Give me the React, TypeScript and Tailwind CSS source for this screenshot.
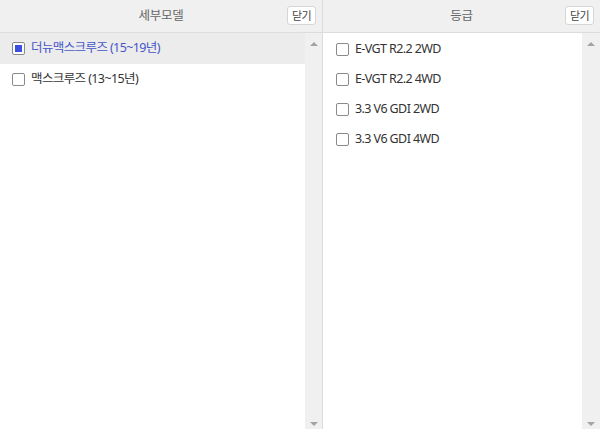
const subModels = [
  { id: 'new', label: '더뉴맥스크루즈 (15~19년)', checked: true },
  { id: 'old', label: '맥스크루즈 (13~15년)', checked: false }
]

const grades = ['E-VGT R2.2 2WD', 'E-VGT R2.2 4WD', '3.3 V6 GDI 2WD', '3.3 V6 GDI 4WD']

const font = { fontFamily: '"Noto Sans", "Noto Sans CJK KR", sans-serif' }

const Checkbox = ({ checked }: { checked: boolean }) => (
  <span className="flex h-[13px] w-[13px] shrink-0 items-center justify-center rounded-[2px] border border-[#8a8a8a] bg-white">
    {checked && <span className="h-[7px] w-[7px] bg-[#3b4fe0]" />}
  </span>
)

const Scrollbar = ({ width }: { width: string }) => (
  <div className={`flex flex-col items-center justify-between bg-[#f0f0f0] pt-[9px] pb-[3px] ${width}`}>
    <span className="h-0 w-0 border-x-[4px] border-b-[4px] border-x-transparent border-b-[#a3a3a3]" />
    <span className="h-0 w-0 border-x-[4px] border-t-[4px] border-x-transparent border-t-[#a3a3a3]" />
  </div>
)

const PanelHeader = ({ title }: { title: string }) => (
  <div className="relative flex h-[33px] items-center justify-center border-b border-[#dcdcdc] bg-[#f0f0f0]">
    <span className="text-[12.5px] tracking-[-0.3px] text-[#666]">{title}</span>
    <button
      type="button"
      className="absolute right-[6px] top-[6px] flex h-[19px] w-[29px] items-center justify-center rounded-[3px] border border-[#d6d6d6] bg-white text-[11px] leading-none tracking-[-0.5px] text-[#444]"
    >
      닫기
    </button>
  </div>
)

export default function App() {
  return (
    <div className="flex h-[429px] w-[600px] bg-white" style={font}>
      <div className="flex w-[323px] flex-col border-r border-[#dcdcdc]">
        <PanelHeader title="세부모델" />
        <div className="flex flex-1">
          <ul className="flex-1">
            {subModels.map((item) => (
              <li
                key={item.id}
                className={`flex h-[31px] items-center gap-[6px] pl-[12px] text-[12.5px] ${
                  item.checked ? 'bg-[#ececec] text-[#4656c8]' : 'text-[#333]'
                }`}
              >
                <Checkbox checked={item.checked} />
                <span className="tracking-[-0.6px]">{item.label}</span>
              </li>
            ))}
          </ul>
          <Scrollbar width="w-[17px]" />
        </div>
      </div>
      <div className="flex flex-1 flex-col">
        <PanelHeader title="등급" />
        <div className="flex flex-1">
          <ul className="flex-1 pt-[1px]">
            {grades.map((grade) => (
              <li key={grade} className="flex h-[30px] items-center gap-[6px] pl-[13px] text-[12.5px] text-[#333]">
                <Checkbox checked={false} />
                <span className="tracking-[-0.6px]">{grade}</span>
              </li>
            ))}
          </ul>
          <Scrollbar width="w-[18px]" />
        </div>
      </div>
    </div>
  )
}
